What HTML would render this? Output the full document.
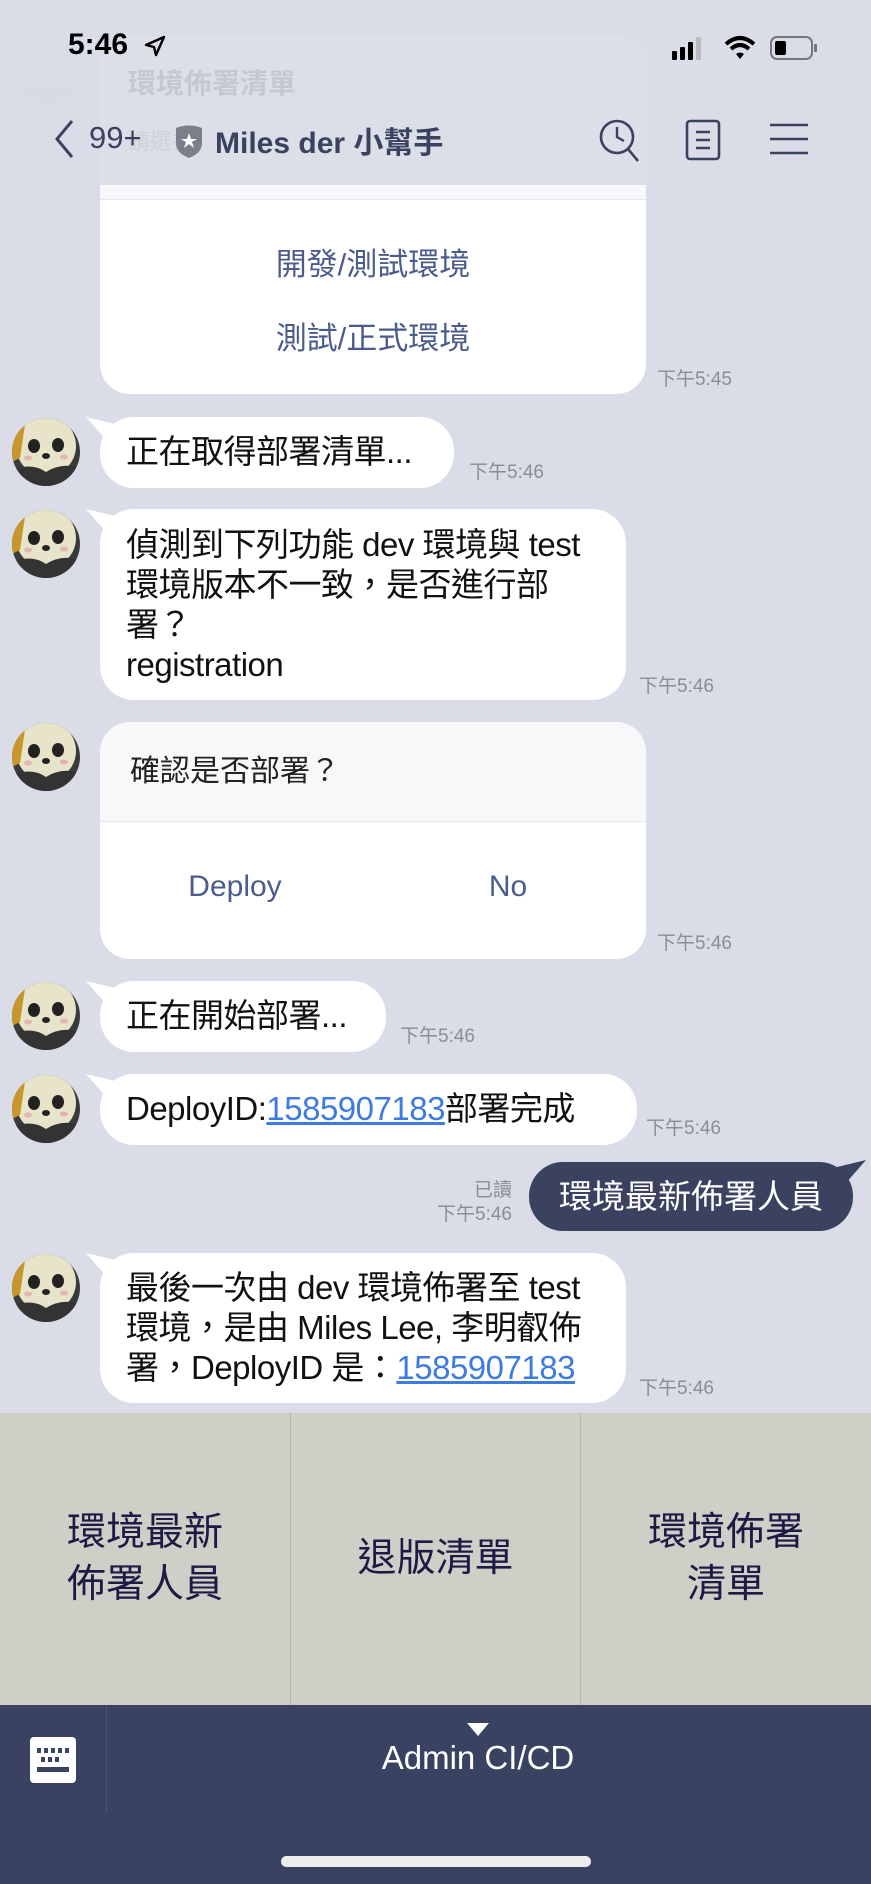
<!DOCTYPE html>
<html><head><meta charset="utf-8"><style>
*{margin:0;padding:0;box-sizing:border-box}
body{width:871px;height:1884px;background:#dadde7;position:relative;overflow:hidden;font-family:"Liberation Sans","Noto Sans CJK TC",sans-serif;color:#111}
.a{position:absolute}
.bub{position:absolute;background:#fff;border-radius:34px;font-size:33px;line-height:40px;padding:0 26px;white-space:nowrap;letter-spacing:-0.5px}
.bub.l:before{content:"";position:absolute;left:-14px;top:0;width:30px;height:24px;background:#fff;clip-path:polygon(0 0,100% 30%,70% 100%)}
.ts{position:absolute;font-size:19px;color:#8a8d96;white-space:nowrap}
.av{position:absolute;left:12px;width:68px;height:68px;border-radius:50%;overflow:hidden}
.lk{color:#3d7be0;text-decoration:underline}
.card{position:absolute;left:100px;width:546px;background:#fff;border-radius:30px;overflow:hidden}
.btn{color:#4b5b8c;font-size:31px;position:absolute;text-align:center}
.rm{position:absolute;top:1413px;height:292px;background:#cfcfc7;color:#1c1b45;font-size:39px;line-height:52px;text-align:center;display:flex;align-items:center;justify-content:center;border-right:1px solid #b6b6ae}
</style></head><body>
<svg width="0" height="0" style="position:absolute"><defs>
<g id="panda"><rect width="68" height="68" fill="#3a3a3a"/><circle cx="34" cy="28" r="30" fill="#e7e4c9"/><path d="M0 0 L14 0 L8 40 L0 44Z" fill="#c9962e"/><ellipse cx="22" cy="28" rx="6" ry="7" fill="#222"/><ellipse cx="46" cy="27" rx="6" ry="7" fill="#222"/><ellipse cx="34" cy="38" rx="4" ry="3" fill="#222"/><ellipse cx="16" cy="40" rx="4" ry="2.5" fill="#e6b4b0"/><ellipse cx="52" cy="39" rx="4" ry="2.5" fill="#e6b4b0"/><path d="M0 52 Q20 44 34 54 Q50 44 68 50 L68 68 L0 68Z" fill="#333"/></g>
</defs></svg>

<div class="a" style="left:600px;top:-40px;width:252px;height:54px;border-radius:27px;background:#cfd2dc"></div>

<div class="card" style="top:36px;height:358px">
  <div style="height:164px;background:#f8f8fa;border-bottom:1px solid #e6e7ec"></div>
  <div class="btn" style="left:0;width:546px;top:203px">開發/測試環境</div>
  <div class="btn" style="left:0;width:546px;top:277px">測試/正式環境</div>
</div>
<div class="ts" style="left:657px;top:364px">下午5:45</div>
<div class="av" style="top:36px;opacity:.2"><svg width="68" height="68"><use href="#panda"/></svg></div>

<div class="a" style="left:0;top:0;width:871px;height:185px;background:rgba(218,221,231,.94)"></div>
<div class="a" style="left:128px;top:62px;font-size:28px;color:#c6c8cf;font-weight:bold">環境佈署清單</div>
<div class="a" style="left:128px;top:124px;font-size:22px;color:#cfd1d8">請選擇</div>
<div class="a" style="left:68px;top:28px;font-size:30px;font-weight:bold;color:#000">5:46</div>
<svg class="a" style="left:143px;top:34px" width="24" height="24" viewBox="0 0 24 24"><path d="M3 11 L21 3 L13 21 L11 13Z" fill="none" stroke="#000" stroke-width="2.4" stroke-linejoin="round"/></svg>
<svg class="a" style="left:670px;top:34px" width="160" height="30" viewBox="0 0 160 30">
<rect x="2" y="17" width="5" height="9" rx="1" fill="#000"/><rect x="10" y="13" width="5" height="13" rx="1" fill="#000"/><rect x="18" y="8" width="5" height="18" rx="1" fill="#000"/><rect x="26" y="3" width="5" height="23" rx="1" fill="#b8bac0"/>
<path d="M56 10 Q70 -2 84 10" stroke="#000" stroke-width="4" fill="none"/><path d="M61 15 Q70 7 79 15" stroke="#000" stroke-width="4" fill="none"/><path d="M66 20 L70 25 L74 20 Q70 17 66 20Z" fill="#000"/>
<rect x="101" y="3" width="41" height="22" rx="6" fill="none" stroke="#777" stroke-width="2"/><rect x="105" y="7" width="11" height="14" rx="2" fill="#000"/><rect x="144" y="10" width="3" height="8" rx="1" fill="#777"/></svg>
<svg class="a" style="left:52px;top:118px" width="26" height="42" viewBox="0 0 26 42"><path d="M20 3 L5 21 L20 39" stroke="#3a4260" stroke-width="3" fill="none"/></svg>
<div class="a" style="left:89px;top:120px;font-size:31px;color:#3a4260">99+</div>
<svg class="a" style="left:174px;top:123px" width="30" height="36" viewBox="0 0 30 36"><path d="M2 5 Q15 0 28 5 L28 20 Q28 30 15 35 Q2 30 2 20Z" fill="#7b7f89"/><path d="M15 10 L17 16 L23 16 L18 19 L20 25 L15 21 L10 25 L12 19 L7 16 L13 16Z" fill="#fff"/></svg>
<div class="a" style="left:215px;top:118px;font-size:30px;font-weight:bold;color:#3a4260">Miles der 小幫手</div>
<svg class="a" style="left:598px;top:118px" width="44" height="46" viewBox="0 0 44 46"><circle cx="19" cy="19" r="16" stroke="#3a4260" stroke-width="2.6" fill="none"/><path d="M30 31 L40 43" stroke="#3a4260" stroke-width="2.6"/><path d="M19 9 L19 19 L26 23" stroke="#3a4260" stroke-width="2.4" fill="none"/></svg>
<svg class="a" style="left:685px;top:119px" width="36" height="42" viewBox="0 0 36 42"><rect x="2" y="2" width="32" height="38" rx="3" stroke="#3a4260" stroke-width="2.6" fill="none"/><path d="M11 13 H25 M11 21 H25 M11 29 H25" stroke="#3a4260" stroke-width="2.4"/></svg>
<svg class="a" style="left:768px;top:122px" width="42" height="34" viewBox="0 0 42 34"><path d="M2 3 H40 M2 17 H40 M2 31 H40" stroke="#3a4260" stroke-width="2.6"/></svg>

<div class="av" style="top:418px"><svg width="68" height="68"><use href="#panda"/></svg></div>
<div class="bub l" style="left:100px;top:417px;width:354px;height:71px;padding-top:15px">正在取得部署清單...</div>
<div class="ts" style="left:469px;top:457px">下午5:46</div>

<div class="av" style="top:510px"><svg width="68" height="68"><use href="#panda"/></svg></div>
<div class="bub l" style="left:100px;top:509px;width:526px;height:191px;padding-top:16px">偵測到下列功能 dev 環境與 test<br>環境版本不一致，是否進行部<br>署？<br>registration</div>
<div class="ts" style="left:639px;top:671px">下午5:46</div>

<div class="av" style="top:723px"><svg width="68" height="68"><use href="#panda"/></svg></div>
<div class="card" style="top:722px;height:237px">
  <div style="height:100px;background:#f8f8fa;border-bottom:1px solid #e6e7ec;font-size:30px;color:#222;padding:24px 0 0 30px">確認是否部署？</div>
  <div class="btn" style="left:35px;width:200px;top:148px;font-size:30px">Deploy</div>
  <div class="btn" style="left:308px;width:200px;top:148px;font-size:30px">No</div>
</div>
<div class="ts" style="left:657px;top:928px">下午5:46</div>

<div class="av" style="top:982px"><svg width="68" height="68"><use href="#panda"/></svg></div>
<div class="bub l" style="left:100px;top:981px;width:286px;height:71px;padding-top:15px">正在開始部署...</div>
<div class="ts" style="left:400px;top:1021px">下午5:46</div>

<div class="av" style="top:1075px"><svg width="68" height="68"><use href="#panda"/></svg></div>
<div class="bub l" style="left:100px;top:1074px;width:537px;height:71px;padding-top:15px">DeployID:<span class="lk">1585907183</span>部署完成</div>
<div class="ts" style="left:646px;top:1113px">下午5:46</div>

<div class="ts" style="left:472px;top:1175px;width:40px;text-align:right">已讀</div>
<div class="ts" style="left:420px;top:1199px;width:92px;text-align:right">下午5:46</div>
<div class="a" style="left:529px;top:1162px;width:324px;height:69px;border-radius:34px;background:#3a4260;color:#fff;font-size:33px;text-align:center;line-height:69px">環境最新佈署人員</div>
<div class="a" style="left:836px;top:1160px;width:30px;height:24px;background:#3a4260;clip-path:polygon(100% 0,0 30%,30% 100%)"></div>

<div class="av" style="top:1254px"><svg width="68" height="68"><use href="#panda"/></svg></div>
<div class="bub l" style="left:100px;top:1253px;width:526px;height:150px;padding-top:15px">最後一次由 dev 環境佈署至 test<br>環境，是由 Miles Lee, 李明叡佈<br>署，DeployID 是：<span class="lk">1585907183</span></div>
<div class="ts" style="left:639px;top:1373px">下午5:46</div>

<div class="rm" style="left:0;width:291px">環境最新<br>佈署人員</div>
<div class="rm" style="left:291px;width:290px">退版清單</div>
<div class="rm" style="left:581px;width:290px;border-right:none">環境佈署<br>清單</div>

<div class="a" style="left:0;top:1705px;width:871px;height:179px;background:#394260"></div>
<div class="a" style="left:106px;top:1706px;width:1px;height:106px;background:#4c5573"></div>
<svg class="a" style="left:29px;top:1736px" width="48" height="48" viewBox="0 0 48 48"><rect x="1" y="1" width="46" height="46" rx="4" fill="#fff"/><g fill="#394260"><rect x="8" y="12" width="4" height="5"/><rect x="15" y="12" width="4" height="5"/><rect x="22" y="12" width="4" height="5"/><rect x="29" y="12" width="4" height="5"/><rect x="36" y="12" width="4" height="5"/><rect x="12" y="21" width="4" height="5"/><rect x="19" y="21" width="4" height="5"/><rect x="26" y="21" width="4" height="5"/><rect x="8" y="31" width="32" height="5"/></g></svg>
<svg class="a" style="left:467px;top:1723px" width="22" height="14" viewBox="0 0 22 14"><path d="M0 0 H22 L11 13Z" fill="#fff"/></svg>
<div class="a" style="left:280px;top:1739px;width:396px;text-align:center;font-size:33px;color:#fff">Admin CI/CD</div>
<div class="a" style="left:281px;top:1856px;width:310px;height:11px;border-radius:6px;background:#eee"></div>
</body></html>
